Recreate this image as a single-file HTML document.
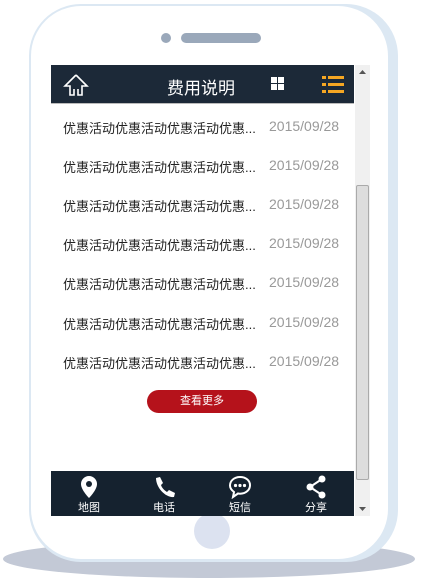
<!DOCTYPE html>
<html><head><meta charset="utf-8"><style>
*{margin:0;padding:0;box-sizing:border-box}
body{width:422px;height:583px;background:#fff;position:relative;overflow:hidden;font-family:"Liberation Sans","Noto Sans CJK SC",sans-serif}
.shadow{position:absolute;left:3px;top:540px;width:412px;height:38px;border-radius:50%;background:#c3c9d6}
.phone{position:absolute;left:29px;top:4px;width:369px;height:558px;border-radius:52px;background:#dce8f3}
.inner{position:absolute;left:31px;top:6px;width:357px;height:553px;border-radius:50px;background:#fff}
.dot{position:absolute;left:161px;top:33px;width:10px;height:10px;border-radius:50%;background:#9aa8ba}
.spk{position:absolute;left:181px;top:33px;width:80px;height:10px;border-radius:5px;background:#9aa8ba}
.home{position:absolute;left:194px;top:513px;width:36px;height:36px;border-radius:50%;background:#dce2f0}
.screen{position:absolute;left:51px;top:65px;width:303px;height:451px;background:#fff}
.hdr{position:absolute;left:0;top:0;width:303px;height:39px;background:#1c2938;border-bottom:1px solid #bbb}
.title{position:absolute;left:116px;top:9px;color:#fff;font-size:17px}
.row{position:absolute;left:12px;font-size:13px;color:#222;width:291px}
.row span{position:absolute;left:206px;color:#999;font-size:14px;top:0}
.btn{position:absolute;left:96px;top:325px;width:110px;height:23px;border-radius:12px;background:#b5121b;color:#fff;font-size:11px;text-align:center;line-height:23px}
.foot{position:absolute;left:0;top:406px;width:303px;height:45px;background:#15222f}
.fi{position:absolute;top:0;width:60px;text-align:center;color:#fff;font-size:11px}
.fi svg{display:block;margin:4px auto 0}
.sb{position:absolute;left:355px;top:65px;width:15px;height:451px;background:#f0f0f0}
.thumb{position:absolute;left:1px;top:120px;width:13px;height:295px;background:#ddd;border:1px solid #aaa;border-radius:2px}
</style></head><body>
<div class="shadow"></div>
<div class="phone"></div>
<div class="inner"></div>
<div class="dot"></div><div class="spk"></div>
<div class="home"></div>
<div class="screen">
<div class="hdr">
<svg style="position:absolute;left:12px;top:8px" width="26" height="24" viewBox="0 0 26 24"><path d="M13 2 L2 13 H7 V22 H11 V16 M13 2 L24 13 H19 V22 H15 V16" fill="none" stroke="#fff" stroke-width="1.6"/></svg>
<div class="title">费用说明</div>
<svg style="position:absolute;left:220px;top:12px" width="13" height="13"><rect x="0" y="0" width="6" height="6" fill="#fff"/><rect x="7" y="0" width="6" height="6" fill="#fff"/><rect x="0" y="7" width="6" height="6" fill="#fff"/><rect x="7" y="7" width="6" height="6" fill="#fff"/></svg>
<svg style="position:absolute;left:271px;top:11px" width="22" height="17"><g fill="#f5a623"><rect x="0" y="0" width="4" height="3"/><rect x="6" y="0" width="16" height="3"/><rect x="0" y="7" width="4" height="3"/><rect x="6" y="7" width="16" height="3"/><rect x="0" y="14" width="4" height="3"/><rect x="6" y="14" width="16" height="3"/></g></svg>
</div>
<div class="row" style="top:53px">优惠活动优惠活动优惠活动优惠...<span>2015/09/28</span></div>
<div class="row" style="top:92px">优惠活动优惠活动优惠活动优惠...<span>2015/09/28</span></div>
<div class="row" style="top:131px">优惠活动优惠活动优惠活动优惠...<span>2015/09/28</span></div>
<div class="row" style="top:170px">优惠活动优惠活动优惠活动优惠...<span>2015/09/28</span></div>
<div class="row" style="top:209px">优惠活动优惠活动优惠活动优惠...<span>2015/09/28</span></div>
<div class="row" style="top:249px">优惠活动优惠活动优惠活动优惠...<span>2015/09/28</span></div>
<div class="row" style="top:288px">优惠活动优惠活动优惠活动优惠...<span>2015/09/28</span></div>
<div class="btn">查看更多</div>
<div class="foot">
<div class="fi" style="left:8px"><svg width="18" height="24" viewBox="0 0 18 24"><path d="M9 1a8 8 0 0 0-8 8c0 6 8 14 8 14s8-8 8-14a8 8 0 0 0-8-8z" fill="#fff"/><circle cx="9" cy="9" r="3" fill="#15222f"/></svg>地图</div>
<div class="fi" style="left:83px"><svg width="22" height="24" viewBox="0 0 22 24"><path d="M3 3l4-1 3 6-2 2c1 3 3 5 6 7l2-2 6 3-1 4c-8 1-18-9-18-19z" fill="#fff"/></svg>电话</div>
<div class="fi" style="left:159px"><svg width="24" height="24" viewBox="0 0 24 24"><path d="M12 2C6 2 2 6 2 10.5c0 3 2 5 4 6.5l-1 5 5-3.5c1 .2 1.5.2 2 .2 6 0 10-4 10-8.5S18 2 12 2z" fill="none" stroke="#fff" stroke-width="2"/><circle cx="7.5" cy="10.5" r="1.6" fill="#fff"/><circle cx="12" cy="10.5" r="1.6" fill="#fff"/><circle cx="16.5" cy="10.5" r="1.6" fill="#fff"/></svg>短信</div>
<div class="fi" style="left:235px"><svg width="22" height="24" viewBox="0 0 22 24"><circle cx="17" cy="4" r="3.5" fill="#fff"/><circle cx="5" cy="12" r="3.5" fill="#fff"/><circle cx="17" cy="20" r="3.5" fill="#fff"/><path d="M17 4L5 12L17 20" stroke="#fff" stroke-width="2" fill="none"/></svg>分享</div>
</div>
</div>
<div class="sb"><div class="thumb"></div>
<svg style="position:absolute;left:4px;top:5px" width="7" height="4"><path d="M0 4L3.5 0L7 4z" fill="#555"/></svg>
<svg style="position:absolute;left:4px;top:442px" width="7" height="4"><path d="M0 0L3.5 4L7 0z" fill="#555"/></svg>
</div>
</body></html>
